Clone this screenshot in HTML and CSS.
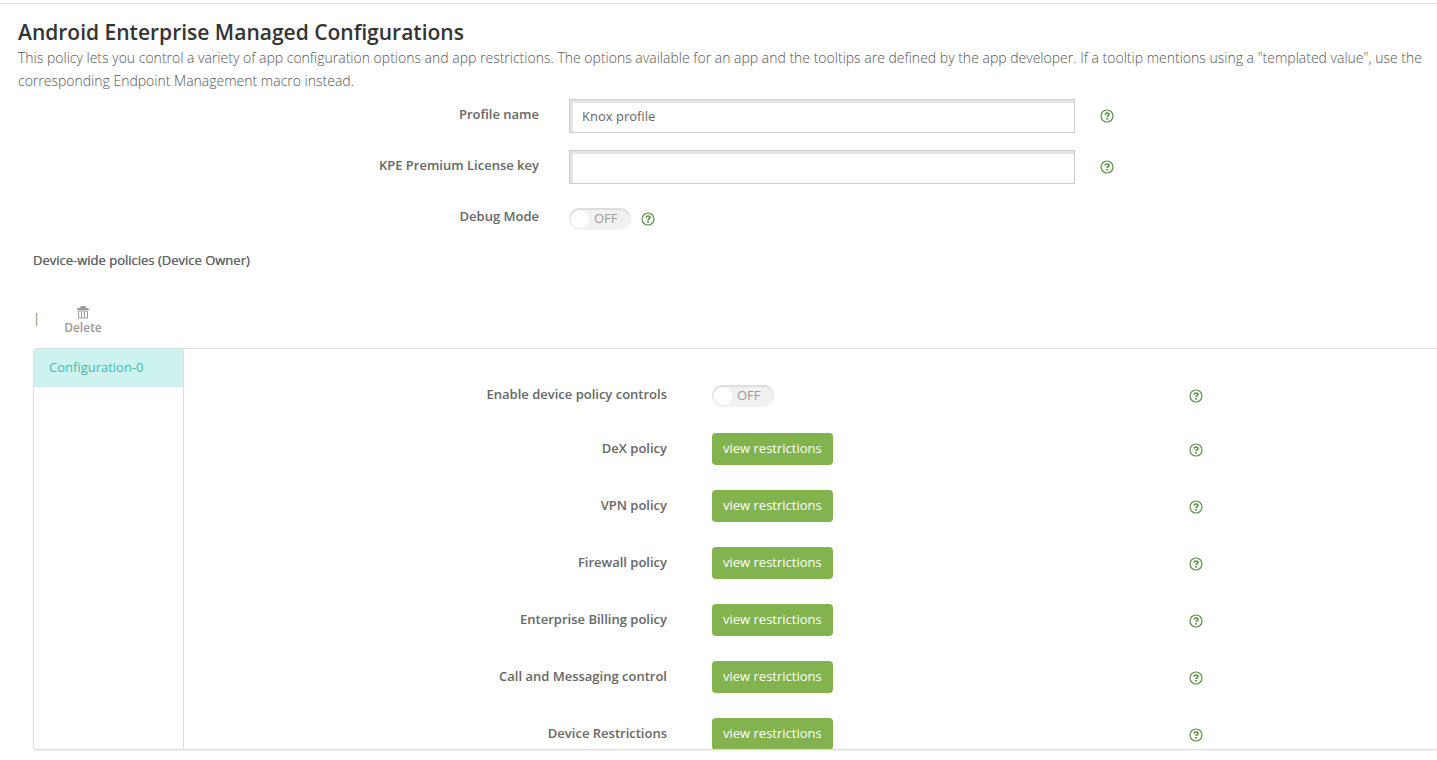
FILE: index.html
```html
<!DOCTYPE html>
<html lang="en">
<head>
<meta charset="utf-8">
<title>Android Enterprise Managed Configurations</title>
<link rel="stylesheet" href="styles.css">
</head>
<body>
<svg class="defs" aria-hidden="true">
  <symbol id="help" viewBox="0 0 14 14">
    <circle cx="7" cy="7" r="6" fill="none" stroke="currentColor" stroke-width="1.2"/>
    <path d="M5.1 5.6C5.2 4.5 6 4 7 4c1.100 0 1.900.6 1.900 1.500 0 1.300-1.800 1.300-1.800 2.600" fill="none" stroke="currentColor" stroke-width="1.700"/>
    <rect x="6.200" y="9" width="1.800" height="1.600" fill="currentColor"/>
  </symbol>
</svg>
<main class="page">
  <header class="intro">
    <h1 class="title">Android Enterprise Managed Configurations</h1>
    <p class="description">This policy lets you control a variety of app configuration options and app restrictions. The options available for an app and the tooltips are defined by the app developer. If a tooltip mentions using a "templated value", use the corresponding Endpoint Management macro instead.</p>
  </header>

  <form class="settings">
    <div class="field">
      <label class="label" for="profile">Profile name</label>
      <input class="textbox" id="profile" type="text" value="Knox profile">
      <button class="help" type="button" aria-label="Help"><svg><use href="#help"/></svg></button>
    </div>
    <div class="field">
      <label class="label" for="license">KPE Premium License key</label>
      <input class="textbox" id="license" type="text">
      <button class="help" type="button" aria-label="Help"><svg><use href="#help"/></svg></button>
    </div>
    <div class="field">
      <label class="label" for="debug">Debug Mode</label>
      <div class="toggle">
        <label class="switch"><input id="debug" type="checkbox"><span>OFF</span></label>
        <button class="help" type="button" aria-label="Help"><svg><use href="#help"/></svg></button>
      </div>
    </div>
  </form>

  <section class="policies">
    <h2 class="subtitle">Device-wide policies (Device Owner)</h2>
    <div class="toolbar">
      <span class="divider">|</span>
      <button class="delete" type="button">
        <svg viewBox="0 0 12 13" aria-hidden="true">
          <path d="M4 0h4l1 2h2l1 1v1H0V3l1-1h2z" fill="currentColor"/>
          <path d="M1.500 5v7h9V5zM4.500 5.500v6M7.500 5.500v6" fill="none" stroke="currentColor"/>
        </svg>
        Delete
      </button>
    </div>
    <div class="panel">
      <nav class="tabs"><a class="tab" href="#configuration-0">Configuration-0</a></nav>
      <div class="rows" id="configuration-0">
        <div class="row row-toggle">
          <label class="label" for="controls">Enable device policy controls</label>
          <div class="toggle"><label class="switch"><input id="controls" type="checkbox"><span>OFF</span></label></div>
          <button class="help" type="button" aria-label="Help"><svg><use href="#help"/></svg></button>
        </div>
        <div class="row">
          <span class="label" id="dex">DeX policy</span>
          <button class="view" type="button" aria-describedby="dex">view restrictions</button>
          <button class="help" type="button" aria-label="Help"><svg><use href="#help"/></svg></button>
        </div>
        <div class="row">
          <span class="label" id="vpn">VPN policy</span>
          <button class="view" type="button" aria-describedby="vpn">view restrictions</button>
          <button class="help" type="button" aria-label="Help"><svg><use href="#help"/></svg></button>
        </div>
        <div class="row">
          <span class="label" id="firewall">Firewall policy</span>
          <button class="view" type="button" aria-describedby="firewall">view restrictions</button>
          <button class="help" type="button" aria-label="Help"><svg><use href="#help"/></svg></button>
        </div>
        <div class="row">
          <span class="label" id="billing">Enterprise Billing policy</span>
          <button class="view" type="button" aria-describedby="billing">view restrictions</button>
          <button class="help" type="button" aria-label="Help"><svg><use href="#help"/></svg></button>
        </div>
        <div class="row">
          <span class="label" id="call">Call and Messaging control</span>
          <button class="view" type="button" aria-describedby="call">view restrictions</button>
          <button class="help" type="button" aria-label="Help"><svg><use href="#help"/></svg></button>
        </div>
        <div class="row">
          <span class="label" id="device">Device Restrictions</span>
          <button class="view" type="button" aria-describedby="device">view restrictions</button>
          <button class="help" type="button" aria-label="Help"><svg><use href="#help"/></svg></button>
        </div>
      </div>
    </div>
  </section>
</main>
</body>
</html>
```

FILE: styles.css
```css
* {
  box-sizing: border-box;
}

body {
  margin: 0;
  background: #fff;
  color: #666;
  font: 13px/20px "Open Sans", "Noto Sans", sans-serif;
}

button,
input {
  font: inherit;
}

button {
  border: 0;
  padding: 0;
  background: none;
  cursor: pointer;
}

.defs {
  display: none;
}

.page {
  display: flex;
  flex-direction: column;
  height: 100vh;
  padding: 3px 0 10px;
}

.intro {
  border-top: 1px solid #ddd;
  padding: 14px 10px 0 18px;
}

.title {
  margin: 0;
  color: #333;
  font-size: 21px;
  font-weight: 600;
  line-height: 28px;
}

.description {
  margin: 0;
  color: #555;
  font-size: 14px;
  font-weight: 300;
  line-height: 23px;
}

.settings {
  display: grid;
  gap: 17px;
  padding-top: 7px;
}

.field {
  display: grid;
  grid-template-columns: 569fr 506fr 362fr;
  align-items: center;
  min-height: 34px;
}

.label {
  padding-right: 30px;
  padding-bottom: 4px;
  color: #666;
  font-weight: 600;
  text-align: right;
}

.textbox {
  width: 100%;
  height: 34px;
  border: 1px solid #ccc;
  border-radius: 0;
  padding: 0 12px;
  background: #fff;
  box-shadow: inset 3px 3px 0 #e4e4e4;
  color: #666;
  outline: 0;
}

.help {
  width: 14px;
  height: 14px;
  color: #5b9149;
}

.help svg {
  display: block;
  width: 14px;
  height: 14px;
}

.field > .help {
  margin-left: 25px;
}

.toggle {
  display: flex;
  align-items: center;
  gap: 10px;
  padding-top: 2px;
}

.switch {
  display: flex;
  align-items: center;
  width: 62px;
  height: 22px;
  border-radius: 11px;
  padding: 0 2px;
  background: #f1f1f1;
  box-shadow: inset 0 2px 1px #ddd;
  color: #999;
}

.switch input {
  appearance: none;
  width: 18px;
  height: 18px;
  margin: 0 5px 0 0;
  border-radius: 50%;
  background: #fff;
}

.switch span {
  padding-bottom: 2px;
}

.policies {
  display: flex;
  flex: 1;
  flex-direction: column;
  min-height: 0;
  padding: 15px 0 0 33px;
}

.subtitle {
  margin: 0;
  color: #666;
  font-size: 13px;
  font-weight: 400;
  line-height: 20px;
  text-shadow: 0 0 0 #666;
}

.toolbar {
  display: flex;
  align-items: center;
  gap: 24px;
  padding: 36px 0 11px;
}

.divider {
  padding-bottom: 8px;
  color: #5b9149;
}

.delete {
  display: flex;
  flex-direction: column;
  align-items: center;
  color: #999;
  font-size: 12px;
  font-weight: 600;
  line-height: 18px;
}

.delete svg {
  width: 12px;
  height: 13px;
}

.panel {
  display: flex;
  flex: 1;
  min-height: 0;
  border: 1px solid #ddd;
  border-right: 0;
  border-radius: 4px 0 0 4px;
  box-shadow: 0 1px 1px #eee;
  overflow: hidden;
}

.tabs {
  flex: 0 0 150px;
  border-right: 1px solid #ddd;
}

.tab {
  display: block;
  padding: 8px 15px 10px;
  background: #cdf3f0;
  color: #38bdb1;
  text-decoration: none;
}

.rows {
  flex: 1;
  padding-top: 30px;
  overflow-y: auto;
  scrollbar-width: none;
}

.row {
  display: grid;
  grid-template-columns: 528fr 477fr 248fr;
  align-items: center;
  min-height: 32px;
  margin-bottom: 25px;
}

.row-toggle {
  margin-bottom: 22px;
}

.row .label {
  padding-right: 45px;
  padding-bottom: 2px;
}

.row .help {
  margin-top: 2px;
}

.view {
  justify-self: start;
  height: 32px;
  border-radius: 4px;
  padding: 0 11px 2px;
  background: #82b34f;
  color: #fff;
}
```
